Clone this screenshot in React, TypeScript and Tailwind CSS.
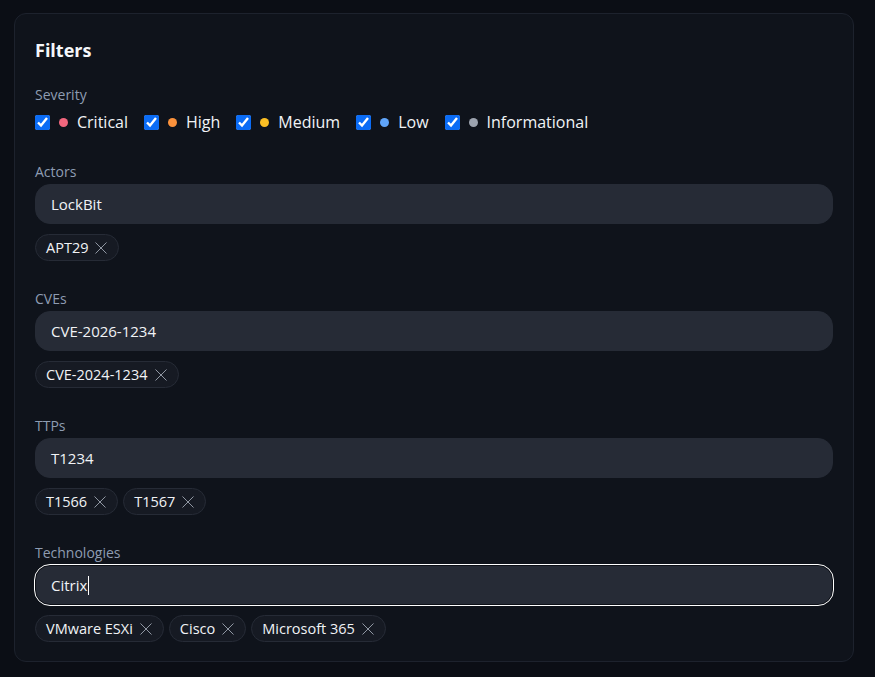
import React from 'react';

type Level = { label: string; dot: string };

const levels: Level[] = [
  { label: 'Critical', dot: 'bg-[#f2677e]' },
  { label: 'High', dot: 'bg-[#fb923c]' },
  { label: 'Medium', dot: 'bg-[#fbbf24]' },
  { label: 'Low', dot: 'bg-[#60a5fa]' },
  { label: 'Informational', dot: 'bg-[#9ca3af]' },
];

function XIcon() {
  return (
    <svg width="14" height="14" viewBox="0 0 24 24" fill="none" stroke="currentColor" strokeWidth="1.6" strokeLinecap="round">
      <path d="M3 3 21 21M21 3 3 21" />
    </svg>
  );
}

function Chip({ text }: { text: string }) {
  return (
    <span className="inline-flex h-[27px] items-center gap-[6px] rounded-full border border-[#262b36] bg-[#161a23] pl-[10px] pr-[10px] text-[14.5px] text-[#f1f3f6]">
      {text}
      <span className="text-[#9aa1ad]">
        <XIcon />
      </span>
    </span>
  );
}

function Field({ label, value, chips, focused }: { label: string; value: string; chips: string[]; focused?: boolean }) {
  return (
    <div className="mt-[28px]">
      <div className="text-[14px] leading-5 text-[#8e9cb2]">{label}</div>
      <div
        className={
          focused
            ? 'mt-[2px] flex h-10 items-center rounded-[15px] border border-[#0d1017] bg-[#262b36] px-[15px] text-[15px] text-[#f1f3f6] outline outline-[1.5px] outline-white'
            : 'mt-[2px] flex h-10 items-center rounded-[15px] border border-[#262b36] bg-[#262b36] px-[15px] text-[15px] text-[#f1f3f6]'
        }
      >
        {value}
        {focused && <span className="ml-px inline-block h-[19px] w-px bg-white" />}
      </div>
      <div className="mt-[10px] flex flex-wrap gap-[5px]">
        {chips.map((c) => (
          <Chip key={c} text={c} />
        ))}
      </div>
    </div>
  );
}

export default function App() {
  return (
    <div className="min-h-[677px] bg-[#0b0e15] pt-[13px] pb-4 pl-[14px] pr-[21px] font-['Open_Sans',sans-serif]">
      <div className="rounded-[12px] border border-[#1d222d] bg-[#0f131b] px-5 pt-5 pb-[19px]">
        <h2 className="text-[18px] font-bold leading-8 text-[#f5f7fa]">Filters</h2>

        <div className="mt-[19px] text-[14px] leading-5 text-[#8e9cb2]">Severity</div>
        <div className="mt-[5px] flex h-6 items-center gap-4">
          {levels.map((l) => (
            <label key={l.label} className="flex items-center">
              <input type="checkbox" defaultChecked className="m-0 h-[15px] w-[15px] accent-[#0b6cf5]" />
              <span className={`ml-[9px] h-[9px] w-[9px] rounded-full ${l.dot}`} />
              <span className="ml-[9px] text-[16px] text-[#f1f3f6]">{l.label}</span>
            </label>
          ))}
        </div>

        <Field label="Actors" value="LockBit" chips={['APT29']} />
        <Field label="CVEs" value="CVE-2026-1234" chips={['CVE-2024-1234']} />
        <Field label="TTPs" value="T1234" chips={['T1566', 'T1567']} />
        <Field label="Technologies" value="Citrix" chips={['VMware ESXi', 'Cisco', 'Microsoft 365']} focused />
      </div>
    </div>
  );
}
